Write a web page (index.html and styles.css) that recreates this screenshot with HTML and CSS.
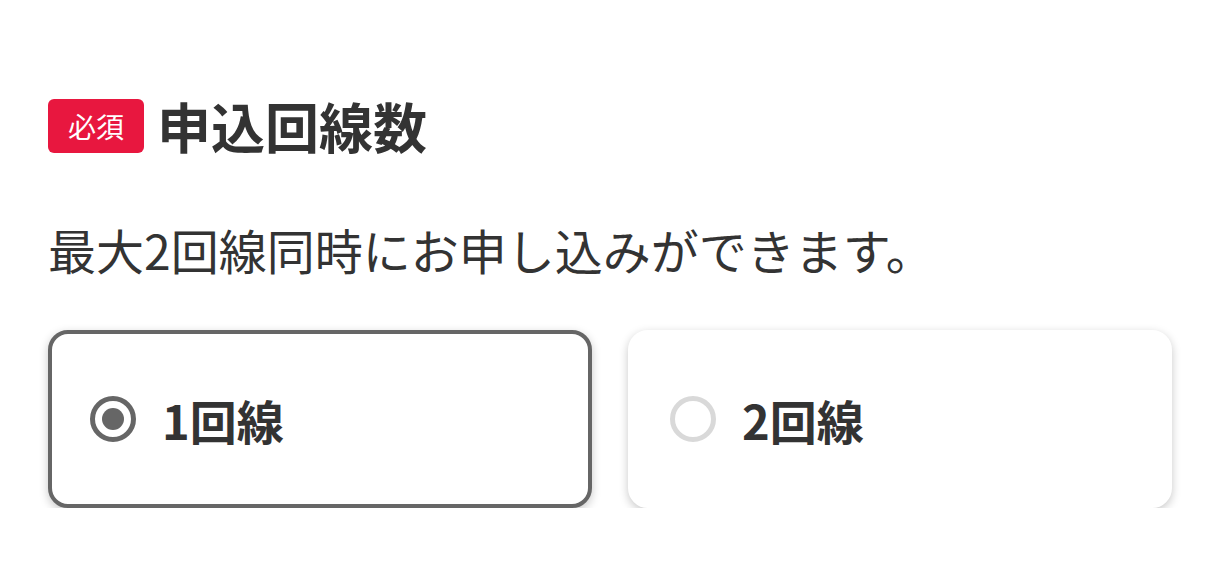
FILE: index.html
```html
<!DOCTYPE html>
<html lang="ja">
<head>
    <meta charset="UTF-8">
    <meta name="viewport" content="width=device-width, initial-scale=1.0">
    <title>申込回線数</title>
    <link rel="stylesheet" href="styles.css">
</head>
<body>
    <div class="section">
        <div class="title-row">
            <span class="badge">必須</span>
            <h2 class="title">申込回線数</h2>
        </div>
        <p class="note">最大2回線同時にお申し込みができます。</p>

        <div class="options">
            <label class="option selected">
                <span class="radio"></span>
                <span class="option-text">1回線</span>
            </label>
            <label class="option">
                <span class="radio"></span>
                <span class="option-text">2回線</span>
            </label>
        </div>
    </div>
</body>
</html>
```

FILE: styles.css
```css
body {
    margin: 0;
    background: #fff;
    font-family: 'Noto Sans CJK JP', 'Noto Sans', sans-serif;
    color: #333;
}

.section {
    padding: 99px 48px 0 48px;
}

.title-row {
    display: flex;
    align-items: center;
    gap: 13px;
}

.badge {
    display: flex;
    align-items: center;
    justify-content: center;
    width: 96px;
    height: 54px;
    background: #e8173f;
    color: #fff;
    border-radius: 6px;
    font-size: 28px;
    line-height: 1;
}

.title {
    margin: 0;
    font-size: 54px;
    font-weight: bold;
    line-height: 54px;
    color: #333;
}

.note {
    margin: 68px 0 0 0;
    font-size: 48px;
    line-height: 56px;
    color: #333;
}

.options {
    display: grid;
    grid-template-columns: 1fr 1fr;
    gap: 36px;
    margin-top: 53px;
}

.option {
    display: flex;
    align-items: center;
    gap: 26px;
    height: 178px;
    box-sizing: border-box;
    padding-left: 38px;
    background: #fff;
    border: 4px solid #fff;
    border-radius: 20px;
    box-shadow: 0 3px 10px rgba(0, 0, 0, 0.22);
}

.option.selected {
    border-color: #666;
}

.radio {
    width: 46px;
    height: 46px;
    box-sizing: border-box;
    border: 5px solid #d9d9d9;
    border-radius: 50%;
    display: flex;
    align-items: center;
    justify-content: center;
}

.option.selected .radio {
    border-color: #666;
}

.option.selected .radio::after {
    content: "";
    width: 22px;
    height: 22px;
    border-radius: 50%;
    background: #666;
}

.option-text {
    font-size: 47px;
    font-weight: bold;
    color: #333;
}
```
